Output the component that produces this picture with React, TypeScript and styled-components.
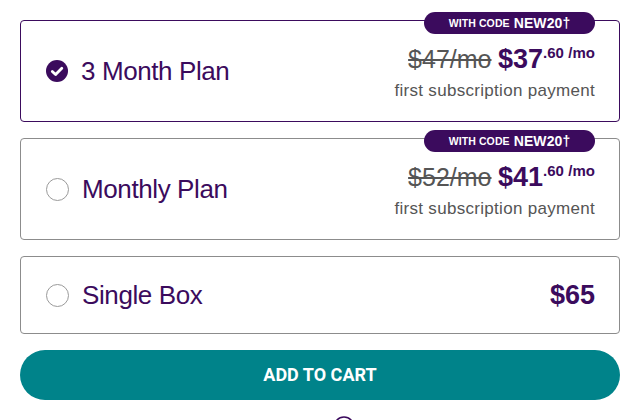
import styled, { createGlobalStyle } from "styled-components";

const purple = "#3b0b5d";

const GlobalStyle = createGlobalStyle`
  body {
    margin: 0;
    background: #ffffff;
    font-family: "Liberation Sans", Arial, sans-serif;
  }
`;

type Plan = {
  id: string;
  title: string;
  oldPrice?: string;
  dollars: string;
  cents?: string;
  promo?: boolean;
};

const plans: Plan[] = [
  { id: "3m", title: "3 Month Plan", oldPrice: "$47/mo", dollars: "$37", cents: ".60", promo: true },
  { id: "1m", title: "Monthly Plan", oldPrice: "$52/mo", dollars: "$41", cents: ".60", promo: true },
  { id: "single", title: "Single Box", dollars: "$65" },
];

const CheckedRadio = () => (
  <svg width="22" height="22" viewBox="0 0 22 22">
    <circle cx="11" cy="11" r="11" fill={purple} />
    <path d="M6.3 11.4 L9.6 14.6 L15.8 8.3" fill="none" stroke="#fff" strokeWidth="2.8" strokeLinecap="round" strokeLinejoin="round" />
  </svg>
);

const App = () => {
  const selected = "3m";
  return (
    <>
      <GlobalStyle />
      <Wrap>
        {plans.map((p) => (
          <Card key={p.id} $active={p.id === selected} $tall={!!p.oldPrice}>
            {p.promo && (
              <Badge>
                <BadgeSmall>WITH CODE</BadgeSmall> NEW20†
              </Badge>
            )}
            <Left>
              {p.id === selected ? <CheckedRadio /> : <Radio />}
              <Title>{p.title}</Title>
            </Left>
            {p.oldPrice ? (
              <PriceBlock>
                <PriceRow>
                  <Old>{p.oldPrice}</Old> <Now>{p.dollars}</Now>
                  <Sup>{p.cents}</Sup> <Sup>/mo</Sup>
                </PriceRow>
                <Sub>first subscription payment</Sub>
              </PriceBlock>
            ) : (
              <Single>{p.dollars}</Single>
            )}
          </Card>
        ))}
        <CartButton>ADD TO CART</CartButton>
        <Help>
          <svg width="22" height="22" viewBox="0 0 22 22">
            <circle cx="11" cy="11" r="10" fill="none" stroke={purple} strokeWidth="1.5" />
          </svg>
        </Help>
      </Wrap>
    </>
  );
};

export default App;

const Wrap = styled.div`
  padding: 20px;
  display: flex;
  flex-direction: column;
  gap: 16px;
`;

const Card = styled.div<{ $active: boolean; $tall: boolean }>`
  position: relative;
  box-sizing: border-box;
  width: 600px;
  height: ${(p) => (p.$tall ? "102px" : "78px")};
  display: flex;
  align-items: center;
  justify-content: space-between;
  padding: 0 24px 0 25px;
  border: 1px solid ${(p) => (p.$active ? purple : "#8c8c8c")};
  border-radius: 4px;
  background: #fff;
`;

const Badge = styled.div`
  position: absolute;
  top: -9px;
  right: 24px;
  width: 171px;
  height: 22px;
  border-radius: 11px;
  background: ${purple};
  color: #fff;
  display: flex;
  align-items: center;
  justify-content: center;
  gap: 4px;
  font-family: "Liberation Sans", Arial, sans-serif;
  font-weight: 700;
  font-size: 14px;
  letter-spacing: 0.1px;
`;

const BadgeSmall = styled.span`
  font-size: 10.5px;
`;

const Left = styled.div`
  display: flex;
  align-items: center;
  gap: 13px;
`;

const Radio = styled.span`
  box-sizing: border-box;
  width: 23px;
  height: 23px;
  border-radius: 50%;
  border: 1px solid #9a9a9a;
  background: #fff;
`;

const Title = styled.span`
  color: ${purple};
  font-size: 26px;
  letter-spacing: -0.4px;
  line-height: 30px;
`;

const PriceBlock = styled.div`
  display: flex;
  flex-direction: column;
  align-items: flex-end;
  margin-top: 2px;
`;

const PriceRow = styled.div`
  line-height: 30px;
  color: ${purple};
  white-space: nowrap;
`;

const Old = styled.span`
  color: #555;
  font-size: 25px;
  text-decoration: line-through;
  text-decoration-thickness: 1.5px;
`;

const Now = styled.span`
  font-size: 27px;
  font-weight: 700;
  margin-left: 2px;
`;

const Sup = styled.span`
  font-size: 15px;
  font-weight: 700;
  line-height: 0;
  vertical-align: 10px;
`;

const Sub = styled.div`
  margin-top: 3px;
  color: #555;
  font-size: 17px;
  letter-spacing: 0.3px;
  line-height: 20px;
`;

const Single = styled.span`
  color: ${purple};
  font-size: 27px;
  font-weight: 700;
`;

const CartButton = styled.button`
  width: 600px;
  height: 50px;
  border: none;
  border-radius: 25px;
  background: #00838a;
  color: #fff;
  font-family: Roboto, "Liberation Sans", sans-serif;
  font-weight: 700;
  font-size: 18px;
  padding-bottom: 3px;
  cursor: pointer;
`;

const Help = styled.div`
  display: flex;
  justify-content: center;
  padding-left: 48px;
`;
